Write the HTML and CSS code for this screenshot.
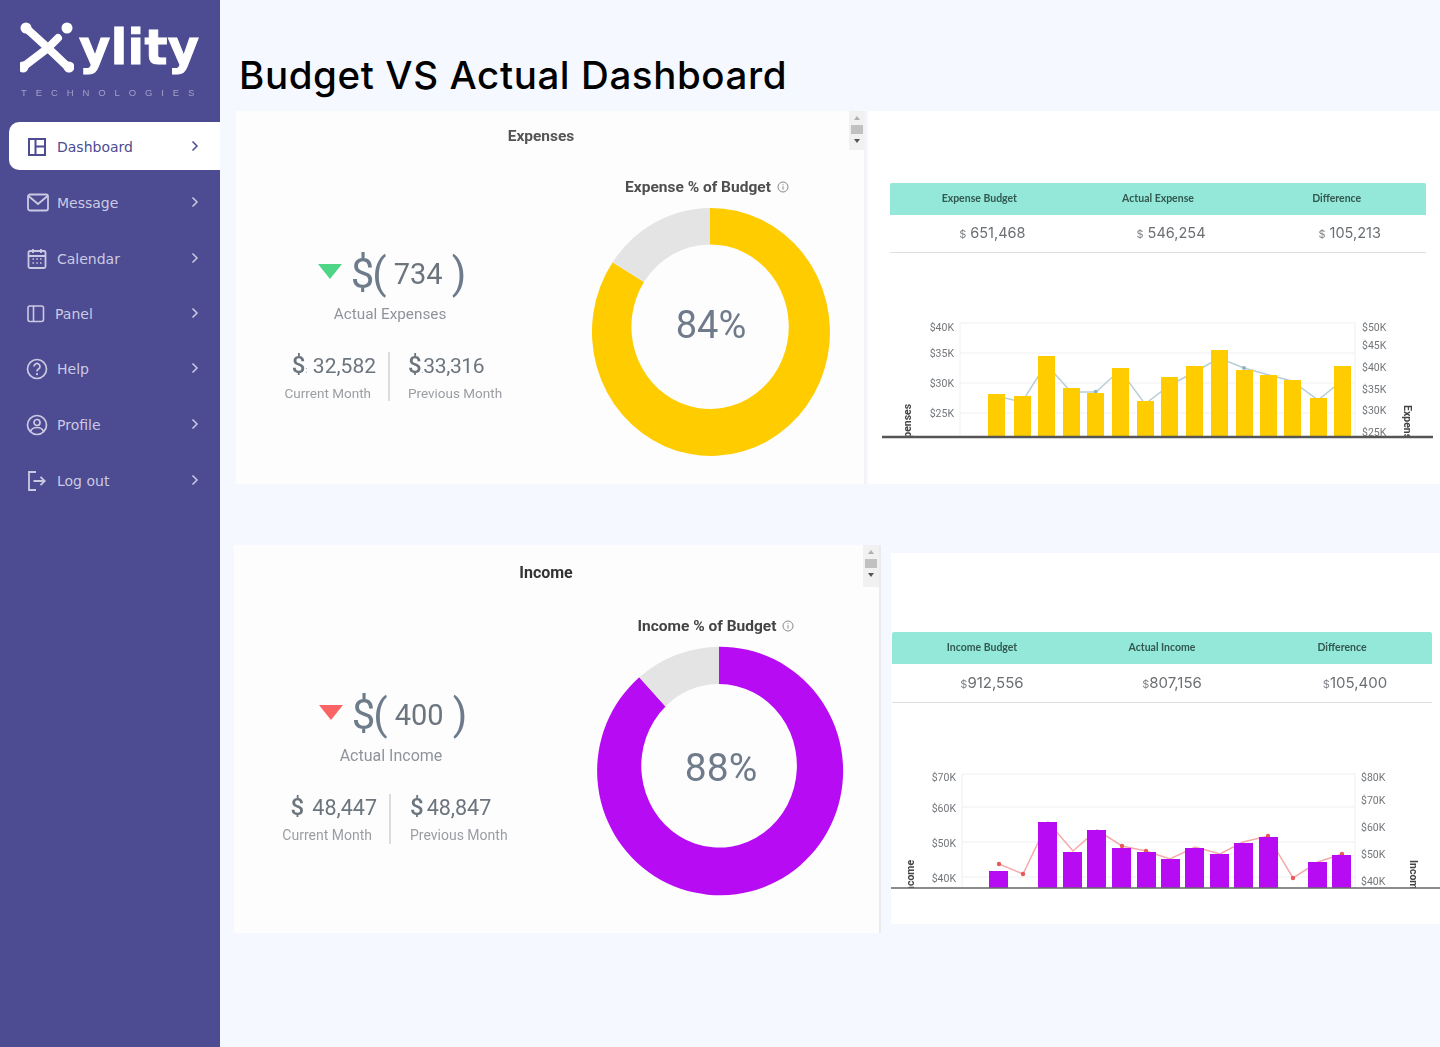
FILE: index.html
```html
<!DOCTYPE html>
<html lang="en">
  <head>
    <meta charset="UTF-8" />
    <title>Budget VS Actual Dashboard</title>
    <link rel="stylesheet" href="styles.css">
  </head>
  <body>
    <aside class="sidebar">
      <div class="logo">
        <div class="logo-top">
          <svg class="logo-mark" width="54" height="52" viewBox="20 22 54 52">
            <path d="M26 28 L48 48 L69 68 M23 67 L48 48 L58 38" fill="none" stroke="#fff" stroke-width="8" stroke-linecap="round" />
            <circle cx="26" cy="28" r="5.500" fill="#fff" />
            <circle cx="23" cy="67" r="5.500" fill="#fff" />
            <circle cx="69" cy="67" r="5.500" fill="#fff" />
            <circle cx="67" cy="28" r="5.500" fill="#fff" />
          </svg>
          <span class="logo-name">ylity</span>
        </div>
        <div class="logo-sub">TECHNOLOGIES</div>
      </div>

      <nav class="nav">
        <a class="nav-item active">
          <svg class="nav-icon" width="20" height="20" viewBox="0 0 20 20">
            <path d="M2 2h16v16H2z M8.500 2v16 M8.500 9.500H18" fill="none" stroke="currentColor" stroke-width="2" />
          </svg>
          <span>Dashboard</span>
          <svg class="chevron" width="8" height="12" viewBox="0 0 8 12"><path d="M1.500 1.500 6 6l-4.500 4.500" /></svg>
        </a>
        <a class="nav-item">
          <svg class="nav-icon" width="22" height="20" viewBox="0 0 22 20">
            <rect x="1" y="1.500" width="20" height="16" rx="2" fill="none" stroke="currentColor" stroke-width="1.800" />
            <path d="M1.500 3 11 11l9.500-8" fill="none" stroke="currentColor" stroke-width="1.800" />
          </svg>
          <span>Message</span>
          <svg class="chevron" width="8" height="12" viewBox="0 0 8 12"><path d="M1.500 1.500 6 6l-4.500 4.500" /></svg>
        </a>
        <a class="nav-item">
          <svg class="nav-icon" width="20" height="22" viewBox="0 0 20 22">
            <rect x="1.500" y="3" width="17" height="17" rx="1.500" fill="none" stroke="currentColor" stroke-width="1.800" />
            <path d="M1.500 8h17 M6 1v4 M14 1v4" fill="none" stroke="currentColor" stroke-width="1.800" />
            <path d="M5.500 11h1.500 M9.300 11h1.500 M13 11h1.500 M5.500 15h1.500 M9.300 15h1.500 M13 15h1.500" fill="none" stroke="currentColor" stroke-width="1.500" />
          </svg>
          <span>Calendar</span>
          <svg class="chevron" width="8" height="12" viewBox="0 0 8 12"><path d="M1.500 1.500 6 6l-4.500 4.500" /></svg>
        </a>
        <a class="nav-item short panel">
          <svg class="nav-icon" width="18" height="18" viewBox="0 0 18 18">
            <rect x="1" y="1" width="15.500" height="15.500" rx="2" fill="none" stroke="currentColor" stroke-width="1.600" />
            <path d="M6.500 1v15.500" fill="none" stroke="currentColor" stroke-width="1.600" />
          </svg>
          <span>Panel</span>
          <svg class="chevron" width="8" height="12" viewBox="0 0 8 12"><path d="M1.500 1.500 6 6l-4.500 4.500" /></svg>
        </a>
        <a class="nav-item short">
          <svg class="nav-icon round" width="22" height="22" viewBox="0 0 22 22">
            <circle cx="11" cy="11" r="9.500" fill="none" stroke="currentColor" stroke-width="1.700" />
            <path d="M8 8.500a3 3 0 1 1 4.500 2.600c-1 .6-1.500 1.200-1.500 2.400" fill="none" stroke="currentColor" stroke-width="1.700" />
            <circle cx="11" cy="16.200" r="1.100" fill="currentColor" />
          </svg>
          <span>Help</span>
          <svg class="chevron" width="8" height="12" viewBox="0 0 8 12"><path d="M1.500 1.500 6 6l-4.500 4.500" /></svg>
        </a>
        <a class="nav-item">
          <svg class="nav-icon round" width="22" height="22" viewBox="0 0 22 22">
            <circle cx="11" cy="11" r="9.500" fill="none" stroke="currentColor" stroke-width="1.700" />
            <circle cx="11" cy="8.500" r="3" fill="none" stroke="currentColor" stroke-width="1.700" />
            <path d="M4.500 17.500c1-3 3.500-4 6.500-4s5.500 1 6.500 4" fill="none" stroke="currentColor" stroke-width="1.700" />
          </svg>
          <span>Profile</span>
          <svg class="chevron" width="8" height="12" viewBox="0 0 8 12"><path d="M1.500 1.500 6 6l-4.500 4.500" /></svg>
        </a>
        <a class="nav-item">
          <svg class="nav-icon" width="20" height="20" viewBox="0 0 20 20">
            <path d="M9 1H2v18h7" fill="none" stroke="currentColor" stroke-width="1.800" />
            <path d="M6.500 10h11 M13.500 5.800 17.700 10l-4.200 4.200" fill="none" stroke="currentColor" stroke-width="1.800" />
          </svg>
          <span>Log out</span>
          <svg class="chevron" width="8" height="12" viewBox="0 0 8 12"><path d="M1.500 1.500 6 6l-4.500 4.500" /></svg>
        </a>
      </nav>
    </aside>

    <main class="main">
      <h1 class="page-title">Budget VS Actual Dashboard</h1>

      <section class="row row-expense">
        <div class="card kpi-card expense">
          <div class="scroller">
            <span class="arrow up"></span>
            <span class="thumb"></span>
            <span class="arrow down"></span>
          </div>
          <h2 class="card-title">Expenses</h2>
          <div class="card-body">
            <div class="kpi">
              <div class="kpi-big">
                <span class="tri green"></span>
                <span class="sym">$(</span>
                <span class="num">734</span>
                <span class="sym close">)</span>
              </div>
              <div class="kpi-label">Actual Expenses</div>
              <div class="kpi-split">
                <div class="split-col left">
                  <div class="split-val"><span class="cur">$<i class="speck">:</i></span> 32,582</div>
                  <div class="split-label">Current Month</div>
                </div>
                <div class="split-col right">
                  <div class="split-val"><span class="cur">$<i class="speck">.</i></span>33,316</div>
                  <div class="split-label">Previous Month</div>
                </div>
              </div>
            </div>
            <div class="gauge">
              <div class="gauge-title">Expense % of Budget
                <svg width="12" height="12" viewBox="0 0 12 12"><circle cx="6" cy="6" r="5" fill="none" stroke="#888" /><path d="M6 5.200v3.500 M6 3.200v1" stroke="#888" fill="none" /></svg>
              </div>
              <svg class="donut" width="250" height="255" viewBox="585 205 250 255">
                <path fill="#ffcc00" d="M710 208 A119 124 0 1 1 612.600 262.200 L644 282 A78.700 82.300 0 1 0 710 244.400 Z" />
                <path fill="#e4e4e4" d="M710 208 A119 124 0 0 0 612.600 262.200 L644 282 A78.700 82.300 0 0 1 710 244.400 Z" />
                <text x="711" y="338" text-anchor="middle" class="donut-pct">84%</text>
              </svg>
            </div>
          </div>
        </div>

        <div class="card table-card expense">
          <div class="summary">
            <div class="summary-head">
              <span>Expense Budget</span>
              <span>Actual Expense</span>
              <span>Difference</span>
            </div>
            <div class="summary-vals">
              <span><small>$</small> 651,468</span>
              <span><small>$</small> 546,254</span>
              <span><small>$</small> 105,213</span>
            </div>
          </div>
          <svg class="combo" width="551" height="130" viewBox="882 310 551 130">
            <defs>
              <clipPath id="plotA"><rect x="882" y="310" width="551" height="127" /></clipPath>
            </defs>
            <g class="grid">
              <path d="M960 323H1355 M960 353H1355 M960 383H1355 M960 413H1355 M960 323V436 M1355 323V436" />
            </g>
            <g class="tick" text-anchor="end">
              <text x="954" y="331">$40K</text>
              <text x="954" y="357">$35K</text>
              <text x="954" y="387">$30K</text>
              <text x="954" y="417">$25K</text>
            </g>
            <g class="tick" clip-path="url(#plotA)">
              <text x="1362" y="331">$50K</text>
              <text x="1362" y="349">$45K</text>
              <text x="1362" y="371">$40K</text>
              <text x="1362" y="393">$35K</text>
              <text x="1362" y="414">$30K</text>
              <text x="1362" y="436">$25K</text>
            </g>
            <g clip-path="url(#plotA)">
              <text class="axis-name" transform="translate(911 449) rotate(-90)">Expenses</text>
              <text class="axis-name" transform="translate(1404 405) rotate(90)">Expenses</text>
            </g>
            <polyline class="trend blue" points="996,396 1022,402 1046,364 1071,392 1096,392 1120,370 1145,404 1170,385 1195,372 1219,358 1244,368 1269,375 1292,381 1318,400 1343,380" />
            <circle cx="1095.700" cy="391.700" r="2" fill="#8fb0c2" />
            <circle cx="1244" cy="368" r="2" fill="#8fb0c2" />
            <g fill="#ffcc00">
              <rect x="988" y="394" width="17" height="43" />
              <rect x="1014" y="396" width="17" height="41" />
              <rect x="1038" y="356" width="17" height="81" />
              <rect x="1063" y="388" width="17" height="49" />
              <rect x="1087" y="393" width="17" height="44" />
              <rect x="1112" y="368" width="17" height="69" />
              <rect x="1137" y="401" width="17" height="36" />
              <rect x="1161" y="377" width="17" height="60" />
              <rect x="1186" y="366" width="17" height="71" />
              <rect x="1211" y="350" width="17" height="87" />
              <rect x="1236" y="370" width="17" height="67" />
              <rect x="1260" y="375" width="17" height="62" />
              <rect x="1284" y="380" width="17" height="57" />
              <rect x="1310" y="398" width="17" height="39" />
              <rect x="1334" y="366" width="17" height="71" />
            </g>
            <path d="M882 437H1433" stroke="#555" stroke-width="2.500" />
          </svg>
        </div>
      </section>

      <section class="row row-income">
        <div class="card kpi-card income">
          <div class="scroller">
            <span class="arrow up"></span>
            <span class="thumb"></span>
            <span class="arrow down"></span>
          </div>
          <h2 class="card-title">Income</h2>
          <div class="card-body">
            <div class="kpi">
              <div class="kpi-big">
                <span class="tri red"></span>
                <span class="sym">$(</span>
                <span class="num">400</span>
                <span class="sym close">)</span>
              </div>
              <div class="kpi-label">Actual Income</div>
              <div class="kpi-split">
                <div class="split-col left">
                  <div class="split-val"><span class="cur">$</span> 48,447</div>
                  <div class="split-label">Current Month</div>
                </div>
                <div class="split-col right">
                  <div class="split-val"><span class="cur">$</span>48,847</div>
                  <div class="split-label">Previous Month</div>
                </div>
              </div>
            </div>
            <div class="gauge">
              <div class="gauge-title">Income % of Budget
                <svg width="12" height="12" viewBox="0 0 12 12"><circle cx="6" cy="6" r="5" fill="none" stroke="#888" /><path d="M6 5.200v3.500 M6 3.200v1" stroke="#888" fill="none" /></svg>
              </div>
              <svg class="donut" width="260" height="262" viewBox="590 640 260 262">
                <path fill="#b70cf3" d="M719 646.700 A123 124.300 0 1 1 639.300 677.300 L665.500 706.500 A77.800 81.800 0 1 0 719 684 Z" />
                <path fill="#e4e4e4" d="M719 646.700 A123 124.300 0 0 0 639.300 677.300 L665.500 706.500 A77.800 81.800 0 0 1 719 684 Z" />
                <text x="721" y="781" text-anchor="middle" class="donut-pct big">88%</text>
              </svg>
            </div>
          </div>
        </div>

        <div class="card table-card income">
          <div class="summary">
            <div class="summary-head">
              <span>Income Budget</span>
              <span>Actual Income</span>
              <span>Difference</span>
            </div>
            <div class="summary-vals">
              <span><small>$</small>912,556</span>
              <span><small>$</small>807,156</span>
              <span class="nudge"><small>$</small>105,400</span>
            </div>
          </div>
          <svg class="combo" width="549" height="140" viewBox="891 760 549 140">
            <defs>
              <clipPath id="plotB"><rect x="891" y="760" width="549" height="128" /></clipPath>
            </defs>
            <g class="grid">
              <path d="M962 774H1355 M962 807H1355 M962 842H1355 M962 877H1355 M962 774V887 M1355 774V887" />
            </g>
            <g class="tick" text-anchor="end">
              <text x="956" y="781">$70K</text>
              <text x="956" y="812">$60K</text>
              <text x="956" y="847">$50K</text>
              <text x="956" y="882">$40K</text>
            </g>
            <g class="tick">
              <text x="1361" y="781">$80K</text>
              <text x="1361" y="804">$70K</text>
              <text x="1361" y="831">$60K</text>
              <text x="1361" y="858">$50K</text>
              <text x="1361" y="885">$40K</text>
            </g>
            <g clip-path="url(#plotB)">
              <text class="axis-name" transform="translate(914 895) rotate(-90)">Income</text>
              <text class="axis-name" transform="translate(1410 860) rotate(90)">Income</text>
            </g>
            <polyline class="trend pink" points="999,864 1023,874 1048,822 1073,851 1097,830 1122,846 1146,851 1170,859 1195,847 1220,854 1243,842 1268,836 1293,878 1318,862 1342,854" />
            <g fill="#e85a5a">
              <circle cx="999" cy="864" r="2.200" />
              <circle cx="1023" cy="874" r="2.200" />
              <circle cx="1122" cy="846" r="2.200" />
              <circle cx="1146" cy="851" r="2.200" />
              <circle cx="1268" cy="836" r="2.200" />
              <circle cx="1293" cy="878" r="2.200" />
              <circle cx="1342" cy="854" r="2.200" />
            </g>
            <g fill="#b70cf3">
              <rect x="989" y="871" width="19" height="17" />
              <rect x="1038" y="822" width="19" height="66" />
              <rect x="1063" y="852" width="19" height="36" />
              <rect x="1087" y="830" width="19" height="58" />
              <rect x="1112" y="848" width="19" height="40" />
              <rect x="1137" y="852" width="19" height="36" />
              <rect x="1161" y="859" width="19" height="29" />
              <rect x="1185" y="848" width="19" height="40" />
              <rect x="1210" y="854" width="19" height="34" />
              <rect x="1234" y="843" width="19" height="45" />
              <rect x="1259" y="837" width="19" height="51" />
              <rect x="1308" y="862" width="19" height="26" />
              <rect x="1332" y="855" width="19" height="33" />
            </g>
            <path d="M891 888H1440" stroke="#666" stroke-width="1.500" />
          </svg>
        </div>
      </section>
    </main>
  </body>
</html>
```
FILE: styles.css
```css
* {
  box-sizing: border-box;
}
body {
  margin: 0;
  display: flex;
  height: 1047px;
  overflow: hidden;
  background: #f5f8fe;
  font-family: "Roboto", Arial, sans-serif;
}

/* sidebar */
.sidebar {
  width: 220px;
  flex: none;
  background: #4d4b92;
  font-family: "DejaVu Sans", sans-serif;
}
.logo {
  height: 122px;
  padding: 22px 0 0 20px;
  filter: blur(0.4px);
}
.logo-top {
  display: flex;
  align-items: flex-start;
  height: 62px;
}
.logo-mark {
  flex: none;
}
.logo-name {
  margin: -6px 0 0 5px;
  color: #fff;
  font-size: 48px;
  font-weight: bold;
  line-height: 62px;
  letter-spacing: 0.4px;
  -webkit-text-stroke: 1px #fff;
}
.logo-sub {
  margin: 3px 0 0 1px;
  color: #a3a2c9;
  font-family: "Liberation Sans", sans-serif;
  font-size: 9.500px;
  line-height: 11px;
  letter-spacing: 8.900px;
  white-space: nowrap;
}
.nav {
  display: flex;
  flex-direction: column;
  gap: 8px;
  padding-left: 9px;
}
.nav-item {
  position: relative;
  display: flex;
  align-items: center;
  height: 48px;
  padding-left: 48px;
  color: #cbcae2;
  font-size: 14px;
}
.nav-item span {
  padding-top: 2px;
}
.nav-item.short {
  height: 47px;
}
.nav-item.short span {
  padding-top: 0;
}
.nav-item.panel {
  padding-left: 46px;
}
.nav-item.active {
  background: #fff;
  color: #4d4b92;
  border-radius: 10px 0 0 10px;
}
.nav-icon {
  position: absolute;
  left: 18px;
  top: 50%;
  margin-top: 1px;
  transform: translateY(-50%);
}
.nav-icon.round {
  left: 17px;
}
.short .nav-icon {
  margin-top: 0;
}
.chevron {
  position: absolute;
  left: 182px;
  top: 50%;
  margin-top: -6px;
  fill: none;
  stroke: currentColor;
  stroke-width: 1.500;
}
.short .chevron {
  margin-top: -7px;
}

/* main column */
.main {
  flex: 1;
  min-width: 0;
}
.page-title {
  margin: 0;
  height: 111px;
  padding: 50px 0 0 19px;
  color: #000;
  font-family: "Inter", sans-serif;
  font-size: 38.500px;
  font-weight: 500;
  line-height: 50px;
  letter-spacing: 0.6px;
  white-space: nowrap;
}
.row {
  display: flex;
  align-items: flex-start;
}
.row-expense {
  height: 373px;
  padding-left: 16px;
  gap: 2px;
}
.row-income {
  margin-top: 61px;
  padding-left: 14px;
  gap: 10px;
}
.card {
  position: relative;
  background: #fdfdfe;
}

/* left cards with the gauge */
.kpi-card.expense {
  width: 630px;
  height: 373px;
  border-right: 2px solid #f1f3f6;
}
.kpi-card.income {
  width: 647px;
  height: 388px;
  border-right: 2px solid #e9ebee;
}
.scroller {
  position: absolute;
  top: 0;
  right: 0;
  width: 15px;
  height: 39px;
  background: #f1f1f1;
  display: flex;
  flex-direction: column;
  align-items: center;
}
.income .scroller {
  width: 16px;
  height: 42px;
}
.thumb {
  width: 12px;
  height: 9px;
  background: #c1c1c1;
  margin: 5px 0;
}
.arrow {
  width: 0;
  height: 0;
  border-left: 3.500px solid transparent;
  border-right: 3.500px solid transparent;
}
.arrow.up {
  margin-top: 5px;
  border-bottom: 4px solid #b0b0b0;
}
.arrow.down {
  border-top: 4px solid #555;
}

/* the card contents are slightly soft */
.card-title,
.card-body,
.summary,
.combo {
  filter: blur(0.35px);
}
.card-title {
  margin: 15px 18px 0 0;
  color: #555;
  font-size: 15.500px;
  font-weight: 700;
  line-height: 20px;
  text-align: center;
}
.income .card-title {
  margin: 18px 21px 0 0;
  color: #333;
  font-size: 16px;
}
.card-body {
  display: flex;
  margin-top: -1px;
}
.kpi {
  width: 308px;
  flex: none;
  padding-top: 107px;
  text-align: center;
}
.income .kpi {
  width: 314px;
  padding-top: 111px;
}
.kpi-big {
  display: flex;
  align-items: center;
  justify-content: center;
  height: 44px;
  color: #6d7b8a;
  padding-left: 4px;
}
.tri {
  width: 0;
  height: 0;
  margin: -6px 9px 0 0;
  border-left: 12px solid transparent;
  border-right: 12px solid transparent;
}
.tri.green {
  border-top: 15px solid #4fd586;
}
.tri.red {
  border-top: 15px solid #fb6464;
}
.sym {
  font-size: 42px;
  font-weight: 400;
  line-height: 44px;
  letter-spacing: -2px;
}
.sym.close {
  letter-spacing: 0;
}
.num {
  margin: 0 9px;
  color: #6c757d;
  font-size: 29px;
  line-height: 44px;
}
.kpi-label {
  margin-top: 8px;
  color: #8f949a;
  font-size: 15.300px;
  line-height: 20px;
}
.income .kpi-label {
  margin-top: 9px;
  font-size: 16px;
}
.kpi-split {
  display: flex;
  margin-top: 28px;
}
.split-col {
  width: 50%;
  height: 49px;
  padding-top: 1px;
}
.income .split-col {
  height: 50px;
}
.split-col.left {
  border-right: 2px solid #dcdcdc;
  padding-right: 17px;
  text-align: right;
}
.split-col.right {
  padding-left: 18px;
  text-align: left;
}
.split-val {
  color: #6c757d;
  font-size: 21px;
  line-height: 24px;
  white-space: nowrap;
}
.expense .split-col.right .split-val {
  letter-spacing: -0.4px;
}
.income .split-val {
  font-size: 21.500px;
}
.income .split-col.right {
  padding-left: 19px;
}
.income .split-col.right .cur {
  margin-right: 3px;
}
.income .split-col.left .cur {
  margin-right: 3px;
}
.split-col.left .split-val {
  margin-right: -5px;
}
.cur {
  font-size: 24px;
  font-weight: 500;
}
.speck {
  font-size: 9px;
  font-style: normal;
  color: #b0b4b8;
}
.split-label {
  margin-top: 2px;
  color: #9a9ea3;
  font-size: 13.500px;
  line-height: 18px;
  white-space: nowrap;
}
.income .split-label {
  margin-top: 6px;
  font-size: 14px;
}
.gauge {
  flex: none;
  padding: 32px 0 0 41px;
}
.income .gauge {
  padding: 34px 0 0 42px;
}
.gauge-title {
  width: 244px;
  height: 20px;
  display: flex;
  align-items: center;
  justify-content: center;
  gap: 6px;
  color: #4f4f4f;
  font-size: 15.500px;
  font-weight: 700;
  white-space: nowrap;
}
.income .gauge-title {
  width: 252px;
  color: #444;
}
.donut {
  display: block;
  margin-top: 8px;
}
.income .donut {
  margin-top: 4px;
}
.donut-pct {
  fill: #6f7b8b;
  font-size: 38px;
}
.donut-pct.big {
  font-size: 39px;
}

/* right cards with the table and combo chart */
.table-card.expense {
  width: 572px;
  height: 373px;
  padding: 72px 0 0 22px;
  background: #fff;
}
.table-card.income {
  width: 549px;
  height: 371px;
  margin-top: 8px;
  padding: 79px 0 0 1px;
  background: #fff;
}
.summary {
  width: 536px;
  font-family: "Inter", sans-serif;
}
.income .summary {
  width: 540px;
}
.summary-head,
.summary-vals {
  display: grid;
  grid-template-columns: 1fr 1fr 1fr;
  text-align: center;
}
.summary-head {
  height: 32px;
  align-items: center;
  background: #93e8da;
  padding-bottom: 2px;
  color: #33584f;
  font-family: "Lato", sans-serif;
  font-size: 10.500px;
  font-weight: 700;
  border-radius: 2px 2px 0 0;
}
.summary-vals {
  height: 38px;
  align-items: center;
  padding-bottom: 2px;
  border-bottom: 1px solid #dedede;
  color: #6b6f73;
  font-size: 14.500px;
}
.income .summary-vals {
  height: 39px;
  padding-bottom: 1px;
  font-size: 15px;
}
.summary-vals span {
  padding-left: 26px;
}
.income .summary-vals span {
  padding-left: 20px;
}
.income .summary-vals span.nudge {
  padding-left: 26px;
}
.summary-vals small {
  color: #808488;
  font-size: 11px;
}
.table-card.expense .combo {
  display: block;
  margin: 57px 0 0 -8px;
}
.table-card.income .combo {
  display: block;
  margin: 57px 0 0 -1px;
}
.grid path {
  fill: none;
  stroke: #efefef;
  stroke-width: 1;
}
.tick {
  fill: #72767a;
  font-family: "Roboto", sans-serif;
  font-size: 10.500px;
}
.axis-name {
  fill: #444;
  font-family: "Roboto", sans-serif;
  font-size: 10.500px;
  font-weight: 700;
}
.trend {
  fill: none;
  stroke-width: 1.500;
}
.trend.blue {
  stroke: #b8cdd6;
}
.trend.pink {
  stroke: #f5a9a9;
}
```
